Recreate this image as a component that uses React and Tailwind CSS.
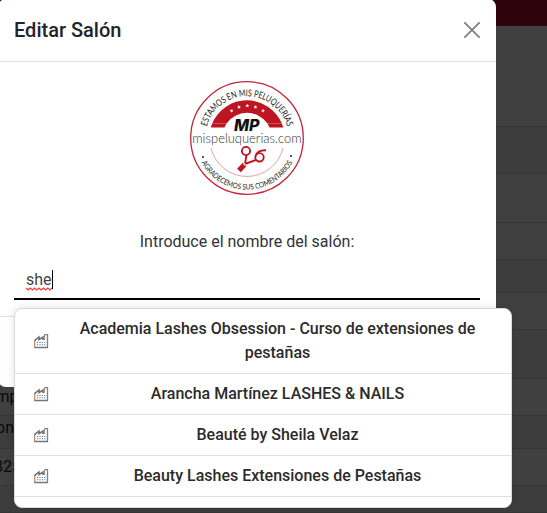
const rows = [
  { h: 'h-[47px]', bg: 'bg-[#3d3d3d]' },
  { h: 'h-[49px]', bg: 'bg-[#3f3f3f]' },
  { h: 'h-[37px]', bg: 'bg-[#404040]' },
  { h: 'h-[33px]', bg: 'bg-[#3d3d3d]' },
  { h: 'h-[37px]', bg: 'bg-[#404040]' },
  { h: 'h-[49px]', bg: 'bg-[#3d3d3d]' },
  { h: 'h-[37px]', bg: 'bg-[#404040]', text: 'Comp', shift: '-ml-[24px]' },
  { h: 'h-[33px]', bg: 'bg-[#3d3d3d]', text: 'Salon', shift: '-ml-[26px] pb-2' },
  { h: 'h-[37px]', bg: 'bg-[#404040]', text: '0825', shift: '-ml-[15px]' },
  { h: 'h-[27px]', bg: 'bg-[#3d3d3d]' },
];

const results = [
  'Academia Lashes Obsession - Curso de extensiones de pestañas',
  'Arancha Martínez LASHES & NAILS',
  'Beauté by Sheila Velaz',
  'Beauty Lashes Extensiones de Pestañas',
];

function FactoryIcon() {
  return (
    <svg width="15" height="15" viewBox="0 0 15 15" fill="none" className="-mr-px shrink-0">
      <path d="M.7 6V13.5" stroke="#c58f6c" strokeWidth="1.3" />
      <path d="M.5 6.6L5 3V5.6L9 3V5.2H10.5" stroke="#6b6f73" strokeWidth="1.5" />
      <path d="M10.5 5.5V1" stroke="#b98a6c" strokeWidth="1.1" />
      <path d="M10.3.7H13.5V13.5" stroke="#6f8598" strokeWidth="1.3" />
      <path d="M.3 13.5H14" stroke="#6f7780" strokeWidth="1.5" />
      <path d="M3 8.5H12M3 10.8H12" stroke="#66788a" strokeWidth="1.1" strokeDasharray="1.2 1.2" />
    </svg>
  );
}

function Star({ x, y, r }) {
  return (
    <path
      transform={`translate(${x} ${y}) rotate(${r})`}
      d="M0-2L.55-.65 2-.6.85.3 1.2 1.7 0 .9-1.2 1.7-.85.3-2-.6-.55-.65Z"
      fill="#fff"
    />
  );
}

function Logo() {
  return (
    <svg width="116" height="116" viewBox="-58 -58 116 116" className="block">
      <defs>
        <path id="upper" d="M-41.8 0A41.8 41.8 0 0 1 41.8 0" />
        <path id="lower" d="M-51.6 0A51.6 51.6 0 0 0 51.6 0" />
      </defs>
      <circle r="56.3" fill="#fff" stroke="#c4253a" strokeWidth="1.3" />
      <path d="M-34.8-14.6A37.8 37.8 0 0 1 34.8-14.6H20.5A25.2 25.2 0 0 0-20.5-14.6Z" fill="#be1522" />
      <path d="M-34.8-14.6L-36.3-10.5H-22.5L-20.5-14.6ZM34.8-14.6L36.3-10.5H22.5L20.5-14.6Z" fill="#be1522" />
      <Star x={-15.5} y={-27.3} r={-25} />
      <Star x={-8} y={-31} r={-12} />
      <Star x={0.3} y={-32.3} r={0} />
      <Star x={8.5} y={-31} r={12} />
      <Star x={16} y={-27.3} r={25} />
      <g fontFamily="Lato, Inter, sans-serif" fill="#1c1c1c">
        <text fontSize="9.4">
          <textPath href="#upper" startOffset="50%" textAnchor="middle" textLength="108" lengthAdjust="spacingAndGlyphs">ESTAMOS EN MIS PELUQUERÍAS</textPath>
        </text>
        <text fontSize="7.6">
          <textPath href="#lower" startOffset="50%" textAnchor="middle" textLength="111" lengthAdjust="spacingAndGlyphs">AGRADECEMOS SUS COMENTARIOS</textPath>
        </text>
      </g>
      <text x="-13" y="-7.2" textLength="25.5" lengthAdjust="spacingAndGlyphs" fontFamily="Inter, sans-serif" fontSize="15.5" fontWeight="800" fontStyle="italic" fill="#111">MP</text>
      <text x="-54.8" y="4.8" textLength="109.5" lengthAdjust="spacingAndGlyphs" fontFamily="Lato, sans-serif" fontSize="14" fontWeight="300" fill="#333">mispeluquerias.com</text>
      <path d="M-36 10A37 37 0 0 0 36 10" fill="none" stroke="#d98b94" strokeWidth=".8" />
      <g fill="none" stroke="#be1522" strokeWidth="1.9">
        <circle cx="-1" cy="13" r="4.1" />
        <circle cx="12.5" cy="19.3" r="4.2" />
        <path d="M-.5 17L-2 26L9 22M8.7 18Q10.5 12 19 12.3" />
        <path d="M-2.5 26.5L-8 32.5" strokeWidth="5" />
        <circle cx="-2.5" cy="26.5" r=".7" stroke="#fff" strokeWidth=".9" />
      </g>
      <circle cx="-44" cy="19" r="1" fill="#222" />
      <circle cx="44" cy="18" r="1" fill="#222" />
    </svg>
  );
}

export default function App() {
  return (
    <div className="relative h-[513px] w-[547px] overflow-hidden bg-[#404040] font-['Roboto',sans-serif] text-base text-[#212529]">
      <div className="h-[26px] bg-[#2e030a]" />
      <div className="h-[101px] border-b border-[#353535]" />
      {rows.map((row, i) => (
        <div key={i} className={`${row.h} ${row.bg} flex w-full items-center border-b border-[#353535] text-[#080909]`}>
          {row.text && <span className={row.shift}>{row.text}</span>}
        </div>
      ))}

      <section className="absolute -left-[2px] -top-px flex h-[388px] w-[498px] flex-col rounded-lg bg-white">
        <header className="flex h-[63px] items-center justify-between border-b border-[#dee2e6] px-4">
          <h1 className="text-xl font-medium leading-[30px]">Editar Salón</h1>
          <svg width="16" height="16" viewBox="0 0 16 16" stroke="#7f7f7f" strokeWidth="1.8" strokeLinecap="round">
            <path d="M.9.9L15.1 15.1M15.1.9L.9 15.1" />
          </svg>
        </header>
        <div className="flex h-[254px] flex-col items-center px-4 pt-[18px]">
          <Logo />
          <p className="mt-[34px] leading-6 text-[#2f3337]">Introduce el nombre del salón:</p>
          <div className="mt-[7px] flex h-[39px] w-full items-center border-b-2 border-black pl-3">
            <div className="relative flex items-center">
              <span className="leading-6 text-[#404448]">she</span>
              <span className="h-[19px] w-px bg-black" />
              <svg width="26" height="4" viewBox="0 0 26 4" className="absolute left-0 top-[19px]" fill="none" stroke="#f33" strokeWidth="1.2">
                <path d="M0 1L2 3L4.2 1L6.4 3L8.6 1L10.8 3L13 1L15.2 3L17.4 1L19.6 3L21.8 1L24 3L26 1" />
              </svg>
            </div>
          </div>
        </div>
        <footer className="flex-1 border-t border-[#dee2e6]" />
      </section>

      <ul className="absolute left-[14px] top-[308px] h-[200px] w-[498px] overflow-hidden rounded-lg border border-[#d9dcdf] bg-white shadow-[0_0_8px_rgba(0,0,0,0.12)]">
        {results.map((name) => (
          <li key={name} className="flex items-center border-b border-[#dedede] py-2 pl-[19px] pr-[19px]">
            <FactoryIcon />
            <span className="ml-[15px] flex-1 text-center font-medium leading-6 text-[#2b2b2b]">{name}</span>
          </li>
        ))}
      </ul>
    </div>
  );
}
